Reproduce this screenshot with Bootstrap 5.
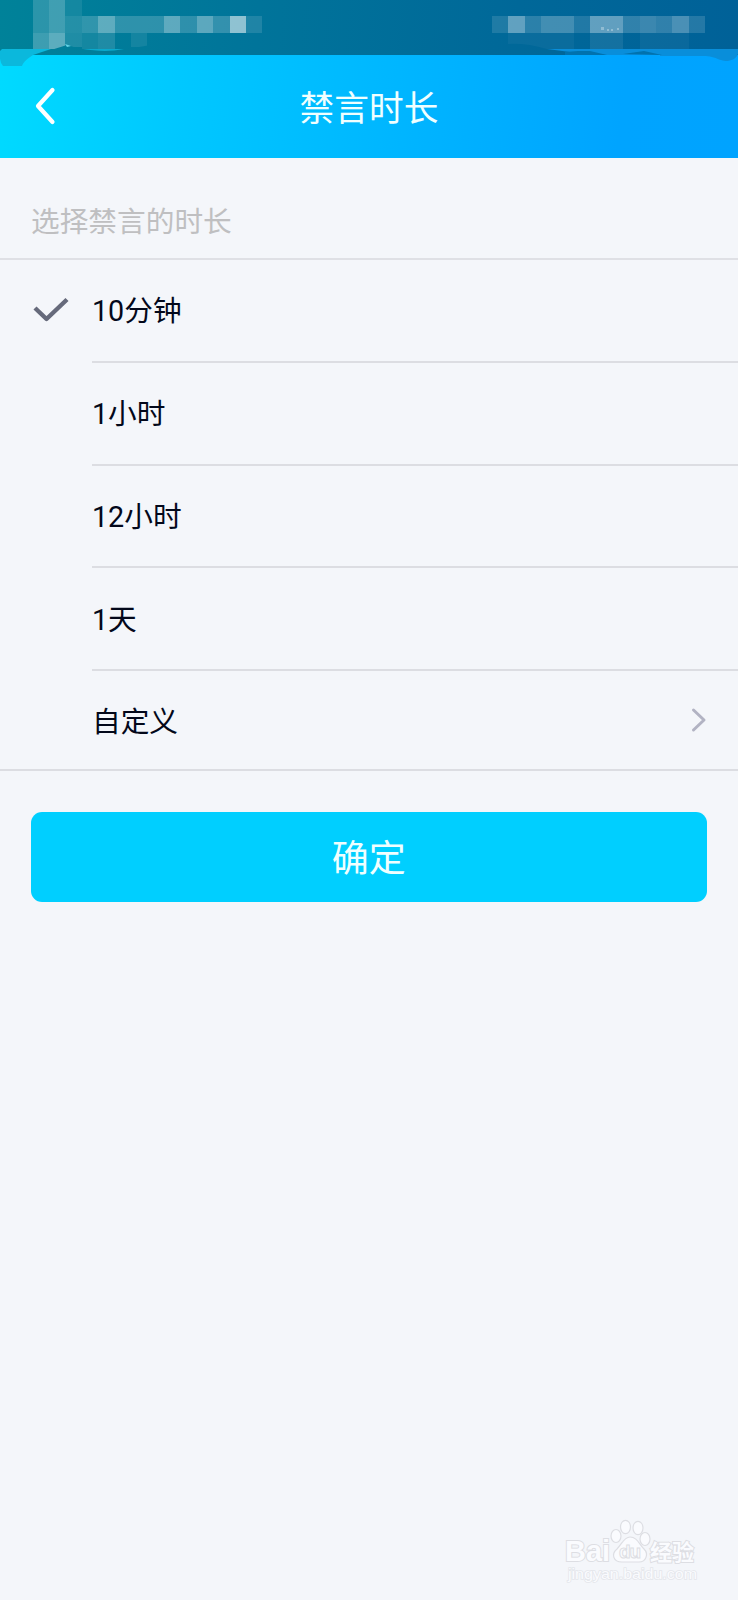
<!DOCTYPE html>
<html lang="zh-CN">
<head>
<meta charset="utf-8">
<meta name="viewport" content="width=device-width, initial-scale=1">
<title>禁言时长</title>
<link href="https://cdn.jsdelivr.net/npm/bootstrap@5.3.0/dist/css/bootstrap.min.css" rel="stylesheet">
<style>
body{background:#f4f6fa;color:#03081a;font-family:Roboto,"Noto Sans CJK SC",sans-serif;font-size:28.7px;line-height:40px;min-height:1600px}
.app-header{height:158px;padding-top:55px;background:linear-gradient(97deg,#00dbff 0%,#00c8ff 25%,#00b4ff 57%,#00a4ff 84%,#00a3ff 100%)}
.status-art{height:68px}
.title-row{height:103px;color:#f0ffff;font-size:34.7px}
.title-row span{padding-top:5px}
.back-btn{left:34px;top:31px;line-height:0}
.section-label{height:102px;padding:27px 31px 0;border-bottom:2px solid #dfe0e5;color:#bfbfc1}
.options{border-bottom:2px solid #dcdde2}
.option{height:102.8px;padding-left:92px}
.option .cell{height:100%;padding-top:2px;border-bottom:2px solid #dcdde2}
.option:last-child{height:97.8px}
.option:last-child .cell{padding-top:4px;border:0}
.option:last-child svg{margin:-4px 24px 0 0}
.tick{left:33px;top:35px}
.btn-confirm{height:90px;margin:41px 31px 0 30.5px;background:#00cfff;color:#f0ffff;border:0;border-radius:11px;font-size:37px}
.btn-confirm span{display:block;padding-top:5px}
.btn-confirm:hover{background:#00c4f2;color:#fff}
.brand{right:30px;bottom:10px}
</style>
</head>
<body class="position-relative d-flex flex-column">
<header class="app-header position-relative">
<svg class="status-art position-absolute top-0 start-0 w-100" viewBox="0 0 738 68" preserveAspectRatio="none" aria-hidden="true">
<defs><linearGradient id="sb" gradientUnits="userSpaceOnUse" x1="0" y1="0" x2="738" y2="60"><stop offset="0" stop-color="#008299"/><stop offset=".35" stop-color="#00749a"/><stop offset=".7" stop-color="#006899"/><stop offset="1" stop-color="#006198"/></linearGradient></defs>
<path fill="url(#sb)" d="M0 0H738V55H0Z"/>
<g fill="#fff" shape-rendering="crispEdges">
<path opacity=".17" d="M33 0H49V33H33Z"/><path opacity=".25" d="M49 0H65V33H49Z"/>
<path opacity=".08" d="M65 0H82V16H65Z"/><path opacity=".24" d="M33 33H49V49H33Z"/><path opacity=".36" d="M49 33H65V49H49Z"/>
<path opacity=".14" d="M65 16H82V33H65Z"/><path opacity=".19" d="M82 16H98V33H82Z"/><path opacity=".37" d="M98 16H115V33H98Z"/>
<path opacity=".18" d="M115 16H164V33H115Z"/><path opacity=".37" d="M164 16H180V33H164Z"/><path opacity=".18" d="M180 16H197V33H180Z"/>
<path opacity=".36" d="M197 16H213V33H197Z"/><path opacity=".2" d="M213 16H230V33H213Z"/><path opacity=".56" d="M230 16H246V33H230Z"/><path opacity=".12" d="M246 16H262V33H246Z"/>
<path opacity=".12" d="M65 33H82V47H65ZM98 33H115V50H98Z"/><path opacity=".08" d="M82 33H98V49H82ZM131 33H147V47H131Z"/>
<path opacity=".12" d="M492 16H508V33H492Z"/><path opacity=".38" d="M508 16H525V33H508Z"/><path opacity=".17" d="M525 16H541V33H525Z"/>
<path opacity=".26" d="M541 16H574V33H541Z"/><path opacity=".13" d="M574 16H590V33H574Z"/><path opacity=".38" d="M590 16H623V33H590Z"/>
<path opacity=".19" d="M623 16H640V33H623Z"/><path opacity=".23" d="M640 16H656V33H640Z"/><path opacity=".19" d="M656 16H672V33H656Z"/><path opacity=".29" d="M672 16H689V33H672Z"/><path opacity=".14" d="M689 16H705V33H689Z"/>
<path opacity=".04" d="M508 33H574V49H508ZM640 33H689V49H640Z"/><path opacity=".08" d="M590 33H623V49H590Z"/>
<path opacity=".3" d="M601 27h3v3h-3ZM607 29h2v2h-2ZM611 29h2v2h-2ZM617 28h2v2h-2Z"/>
</g>
<path fill="url(#sb)" d="M35 55 67 45C92 54 118 51 150 45L212 37H262V55Z"/>
<path fill="#0bb8dc" d="M2 49H51L33 55C27 59 24 61 22 66H3Q-1 62 0 51Z"/>
<path fill="#64d4e7" d="M65 44 71 46 67 47Z"/>
<path fill="#0aa9cc" d="M83 49H124C110 52 95 51 83 49Z"/>
<path fill="url(#sb)" d="M508 44Q527 43 547 49L570 52 560 55H508Z"/>
<path fill="#098eda" d="M547 49H738V54C736 59 731 61 726 61 720 61 717 57 706 56H660V55H605L589 52 570 52Z"/>
<path fill="#0072ae" d="M565 52 578 51 590 51 607 55H565ZM623 54 644 51 662 55Z"/>
</svg>
<div class="title-row position-relative d-flex align-items-center justify-content-center">
<a href="#" class="back-btn position-absolute" aria-label="返回"><svg width="24" height="40" fill="none" stroke="#fff" stroke-width="4.2" stroke-linecap="round" stroke-linejoin="round"><path d="M18.500 4 4 20 18.500 36"/></svg></a>
<span>禁言时长</span>
</div>
</header>
<main>
<div class="section-label d-flex align-items-center">选择禁言的时长</div>
<div class="options">
<div class="option position-relative"><svg class="tick position-absolute" width="38" height="30" fill="none" stroke="#666a7b" stroke-width="4.4" stroke-linecap="butt" stroke-linejoin="round"><path d="M2 13 13.500 24 34 4.500"/></svg><div class="cell d-flex align-items-center">10分钟</div></div>
<div class="option"><div class="cell d-flex align-items-center">1小时</div></div>
<div class="option"><div class="cell d-flex align-items-center">12小时</div></div>
<div class="option"><div class="cell d-flex align-items-center">1天</div></div>
<div class="option"><div class="cell d-flex align-items-center justify-content-between">自定义<svg width="24" height="28" viewBox="0 0 24 28" fill="none" stroke="#b2b3c3" stroke-width="3" stroke-linecap="round" stroke-linejoin="round"><path d="M3.500 4 14 14 3.500 24"/></svg></div></div>
</div>
<div class="d-grid"><button type="button" class="btn btn-confirm p-0"><span>确定</span></button></div>
</main>
<svg class="brand position-absolute" width="150" height="74" viewBox="0 0 150 74" aria-hidden="true">
<g fill="#fafbfe" stroke="#dddee3" stroke-width="1.2">
<g paint-order="stroke" stroke-width="2"><text x="7" y="45" font-family="Liberation Sans" font-weight="700" font-size="29" textLength="45" lengthAdjust="spacingAndGlyphs">Bai</text>
<text x="92" y="44" font-family="Noto Sans CJK SC" font-weight="700" font-size="22" textLength="44" lengthAdjust="spacingAndGlyphs">经验</text></g>
<ellipse cx="58" cy="20" rx="5" ry="6.500"/><ellipse cx="67.500" cy="11" rx="5" ry="6.700"/><ellipse cx="80" cy="12" rx="5" ry="6.700"/><ellipse cx="87" cy="23" rx="5" ry="6.500"/>
<path d="M72 21C79 21 81 28 86 33 91 38 88 46 81 46H64C55 46 53 38 59 33 64 28 66 21 72 21Z"/>
<text x="61" y="42" font-family="Liberation Sans" font-weight="700" font-size="19" textLength="22" stroke-width="1">du</text>
<text x="10" y="63" font-family="Liberation Sans" font-size="15" stroke="#e4e6eb" stroke-width="1.500" textLength="129" lengthAdjust="spacingAndGlyphs" paint-order="stroke">jingyan.baidu.com</text>
</g>
</svg>
<script src="https://cdn.jsdelivr.net/npm/bootstrap@5.3.0/dist/js/bootstrap.bundle.min.js"></script>
</body>
</html>
